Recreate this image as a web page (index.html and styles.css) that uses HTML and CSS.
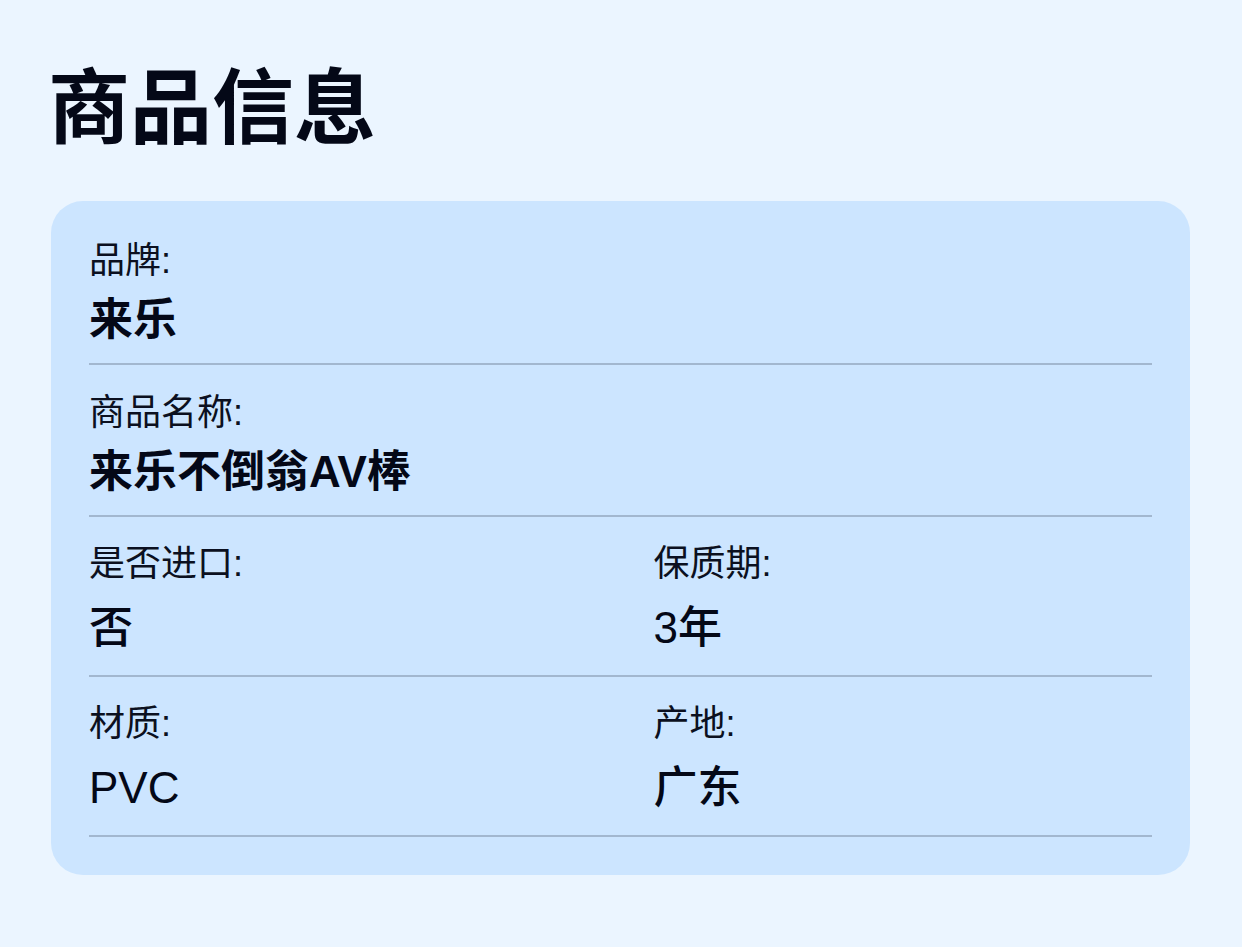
FILE: index.html
```html
<!DOCTYPE html>
<html lang="zh-CN">
<head>
<meta charset="utf-8">
<title>商品信息</title>
<link rel="stylesheet" href="styles.css">
</head>
<body>
<main class="page">
  <h1 class="title">商品信息</h1>
  <section class="card">
    <div class="row">
      <div class="field">
        <div class="label">品牌:</div>
        <div class="value">来乐</div>
      </div>
    </div>
    <div class="row">
      <div class="field">
        <div class="label">商品名称:</div>
        <div class="value">来乐不倒翁AV棒</div>
      </div>
    </div>
    <div class="row row-split">
      <div class="field">
        <div class="label">是否进口:</div>
        <div class="value value-lg">否</div>
      </div>
      <div class="field">
        <div class="label">保质期:</div>
        <div class="value value-lg">3年</div>
      </div>
    </div>
    <div class="row row-split">
      <div class="field">
        <div class="label">材质:</div>
        <div class="value value-lg">PVC</div>
      </div>
      <div class="field">
        <div class="label">产地:</div>
        <div class="value value-lg">广东</div>
      </div>
    </div>
  </section>
</main>
</body>
</html>
```

FILE: styles.css
```css
* {
  box-sizing: border-box;
}

html, body {
  margin: 0;
  padding: 0;
}

body {
  background: #ebf5ff;
  color: #050816;
  font-family: "Liberation Sans", "Noto Sans CJK SC", sans-serif;
}

.page {
  padding: 68px 52px 51px 51px;
}

.title {
  margin: 0 0 51px -3px;
  font-size: 82px;
  line-height: 1;
  font-weight: 700;
  color: #040817;
}

.card {
  background: #cce5ff;
  border-radius: 32px;
  padding: 38px;
}

.row {
  padding: 26px 0 16px 0;
  border-bottom: 2px solid #a2b7cf;
}

.row:first-child {
  padding-top: 0;
}

.row-split {
  display: grid;
  grid-template-columns: 1fr 1fr;
  column-gap: 66px;
  padding: 25px 0 20px 0;
}

.label {
  font-size: 36px;
  line-height: 1.2;
  font-weight: 400;
  color: #0b1020;
}

.value {
  margin-top: 12px;
  font-size: 44px;
  line-height: 1.2;
  font-weight: 700;
  color: #040817;
}

.value-lg {
  margin-top: 17px;
  font-weight: 500;
}
```
